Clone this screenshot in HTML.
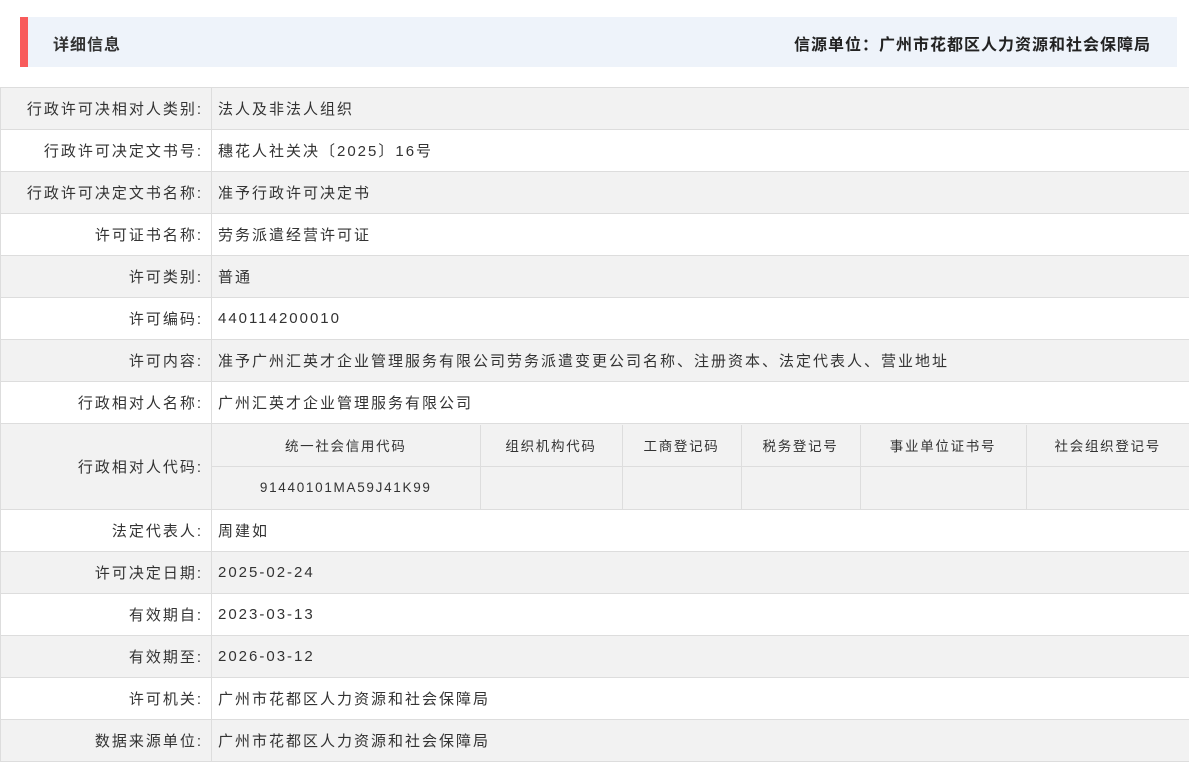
<!DOCTYPE html>
<html><head><meta charset="utf-8"><style>
*{margin:0;padding:0;box-sizing:border-box}
body{width:1189px;height:760px;overflow:hidden;background:#fff;font-family:"Liberation Sans","Noto Sans CJK SC",sans-serif;color:#333}
.hd{position:absolute;left:20px;top:17px;width:1157px;height:50px;background:#eef3fa;border-left:8px solid #f85b5b}
.hd .l{position:absolute;left:25px;top:14px;font-size:16px;font-weight:bold;color:#333;letter-spacing:1px}
.hd .r{position:absolute;right:26px;top:14px;font-size:16px;font-weight:bold;color:#222;letter-spacing:1px}
table.m{position:absolute;left:0;top:87px;width:1190px;border-collapse:collapse;font-size:15px;letter-spacing:2px}
table.m>tbody>tr>td{border:1px solid #ddd;height:42px;padding:0 6px}
table.m td.k{width:211px;text-align:right;padding-right:8px}
tr.g>td{background:#f2f2f2}
table.n{width:100%;border-collapse:collapse;font-size:13.5px;text-align:center;letter-spacing:1.7px}
table.n td{border:1px solid #ddd;height:42px;border-top:none}
table.n tr:last-child td{border-bottom:none}
table.n td:first-child{border-left:none}
table.n td:last-child{border-right:none}
</style></head><body>
<div class="hd"><span class="l">详细信息</span><span class="r">信源单位：广州市花都区人力资源和社会保障局</span></div>
<table class="m"><tbody>
<tr class="g"><td class="k">行政许可决相对人类别:</td><td>法人及非法人组织</td></tr>
<tr><td class="k">行政许可决定文书号:</td><td>穗花人社关决〔2025〕16号</td></tr>
<tr class="g"><td class="k">行政许可决定文书名称:</td><td>准予行政许可决定书</td></tr>
<tr><td class="k">许可证书名称:</td><td>劳务派遣经营许可证</td></tr>
<tr class="g"><td class="k">许可类别:</td><td>普通</td></tr>
<tr><td class="k">许可编码:</td><td>440114200010</td></tr>
<tr class="g"><td class="k">许可内容:</td><td>准予广州汇英才企业管理服务有限公司劳务派遣变更公司名称、注册资本、法定代表人、营业地址</td></tr>
<tr><td class="k">行政相对人名称:</td><td>广州汇英才企业管理服务有限公司</td></tr>
<tr class="g"><td class="k" style="height:86px">行政相对人代码:</td><td style="padding:0"><table class="n"><tr><td style="width:268px">统一社会信用代码</td><td style="width:142px">组织机构代码</td><td style="width:119px">工商登记码</td><td style="width:119px">税务登记号</td><td style="width:166px">事业单位证书号</td><td>社会组织登记号</td></tr><tr><td>91440101MA59J41K99</td><td></td><td></td><td></td><td></td><td></td></tr></table></td></tr>
<tr><td class="k">法定代表人:</td><td>周建如</td></tr>
<tr class="g"><td class="k">许可决定日期:</td><td>2025-02-24</td></tr>
<tr><td class="k">有效期自:</td><td>2023-03-13</td></tr>
<tr class="g"><td class="k">有效期至:</td><td>2026-03-12</td></tr>
<tr><td class="k">许可机关:</td><td>广州市花都区人力资源和社会保障局</td></tr>
<tr class="g"><td class="k">数据来源单位:</td><td>广州市花都区人力资源和社会保障局</td></tr>
</tbody></table>
</body></html>
